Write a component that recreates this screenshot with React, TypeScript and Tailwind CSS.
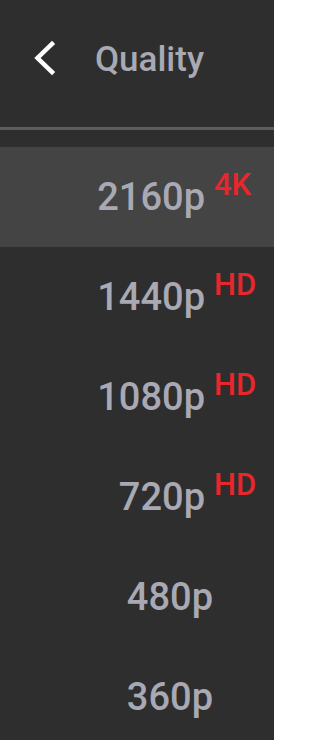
import React from "react";

type Item = { label: string; badge?: string; active?: boolean };

const items: Item[] = [
  { label: "2160p", badge: "4K", active: true },
  { label: "1440p", badge: "HD" },
  { label: "1080p", badge: "HD" },
  { label: "720p", badge: "HD" },
  { label: "480p" },
  { label: "360p" },
];

export default function App() {
  return (
    <div
      className="w-[274px] h-[740px] overflow-hidden bg-[#2e2e2e] text-[#a9a9b4]"
      style={{ fontFamily: "Roboto, 'Liberation Sans', sans-serif" }}
    >
      <div className="h-[127px] flex items-start">
        <svg
          className="ml-[33px] mt-[40px] shrink-0"
          width="24"
          height="36"
          viewBox="0 0 24 36"
          fill="none"
        >
          <polyline
            points="19,4 4.5,18 19,32"
            stroke="#ffffff"
            strokeWidth="4.5"
            strokeLinecap="square"
            strokeLinejoin="miter"
          />
        </svg>
        <span className="ml-[38px] mt-[42px] text-[35px] leading-none font-medium">
          Quality
        </span>
      </div>
      <div className="h-[3px] bg-[#5c5c5c]" />
      <div className="h-[17px]" />
      <div className="flex flex-col">
        {items.map((it) => (
          <div
            key={it.label}
            className={
              "h-[100px] shrink-0 flex items-center justify-end pr-[17px] " +
              (it.active ? "bg-[#444444]" : "")
            }
          >
            <div className="flex items-start">
              <span className="text-[38px] leading-[45px] font-medium">
                {it.label}
              </span>
              {it.badge ? (
                <span className="ml-[9px] w-[43px] -mt-[6px] text-[31px] leading-none font-medium text-[#e8262b]">
                  {it.badge}
                </span>
              ) : (
                <span className="w-[44px]" />
              )}
            </div>
          </div>
        ))}
      </div>
    </div>
  );
}
